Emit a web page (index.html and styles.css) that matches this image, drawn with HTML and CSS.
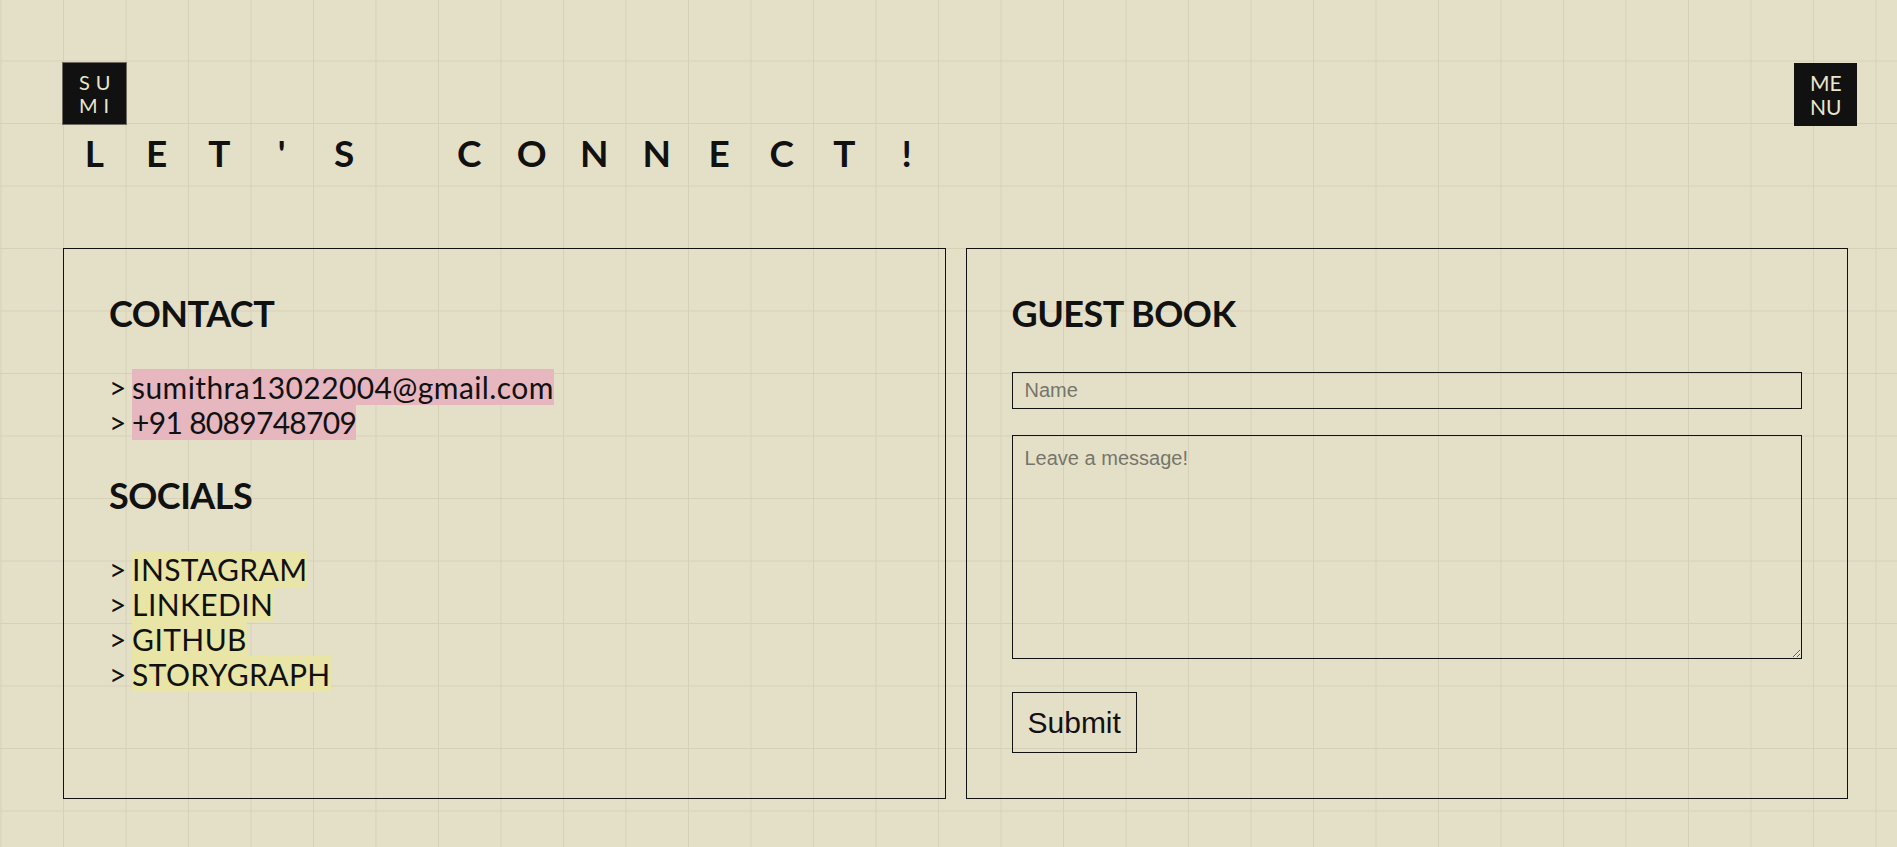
FILE: index.html
```html
<!DOCTYPE html>
<html lang="en">
<head>
<meta charset="utf-8">
<title>Let's Connect!</title>
<link rel="stylesheet" href="styles.css">
</head>
<body>
<div class="page">
  <header class="topbar">
    <a class="logo" href="#"><span>SU</span><span>MI</span></a>
    <button class="menu" type="button"><span>ME</span><span>NU</span></button>
  </header>

  <h1 class="title"><span>L</span><span>E</span><span>T</span><span>'</span><span>S</span><span>&nbsp;</span><span>C</span><span>O</span><span>N</span><span>N</span><span>E</span><span>C</span><span>T</span><span>!</span></h1>

  <main class="panels">
    <section class="panel">
      <h2 class="panel-title">CONTACT</h2>
      <ul class="links">
        <li>&gt; <a class="hl-pink" href="#">sumithra13022004@gmail.com</a></li>
        <li>&gt; <a class="hl-pink tel" href="#">+91 8089748709</a></li>
      </ul>
      <h2 class="panel-title">SOCIALS</h2>
      <ul class="links">
        <li>&gt; <a class="hl-yellow" href="#">INSTAGRAM</a></li>
        <li>&gt; <a class="hl-yellow" href="#">LINKEDIN</a></li>
        <li>&gt; <a class="hl-yellow" href="#">GITHUB</a></li>
        <li>&gt; <a class="hl-yellow" href="#">STORYGRAPH</a></li>
      </ul>
    </section>

    <section class="panel">
      <h2 class="panel-title guest">GUEST BOOK</h2>
      <form class="guest-form">
        <input class="field" type="text" placeholder="Name">
        <textarea class="field area" placeholder="Leave a message!"></textarea>
        <button class="submit" type="button">Submit</button>
      </form>
    </section>
  </main>
</div>
</body>
</html>
```

FILE: styles.css
```css
html, body {
  margin: 0;
  padding: 0;
}

body {
  min-height: 847px;
  background-color: #e4e0c7;
  background-image:
    linear-gradient(to right, #d5d0b6 1px, transparent 1px),
    linear-gradient(to bottom, #d5d0b6 1px, transparent 1px);
  background-size: 62.5px 62.5px;
  background-position: 0.5px -2px;
  font-family: "Lato", "Liberation Sans", sans-serif;
  color: #111111;
}

.page {
  padding: 62px 40px 40px 62px;
}

.topbar {
  display: flex;
  justify-content: space-between;
  align-items: flex-start;
}

.logo,
.menu {
  display: flex;
  flex-direction: column;
  justify-content: center;
  box-sizing: border-box;
  background: #111111;
  color: #ebe6cc;
  font-family: "Lato", sans-serif;
  font-size: 20px;
  line-height: 23px;
  text-decoration: none;
  text-align: left;
}

.logo {
  width: 65px;
  height: 63px;
  border: 1px solid #6e6c60;
  padding-left: 16px;
  letter-spacing: 6px;
}

.menu {
  width: 63px;
  height: 63px;
  border: 0;
  margin-top: 1px;
  padding: 0 0 0 16px;
  font-size: 21px;
  line-height: 24px;
  cursor: pointer;
}

.title {
  display: flex;
  margin: 5px 0 0 1px;
  font-size: 37px;
  font-weight: 700;
  line-height: 44px;
}

.title > span {
  width: 62.5px;
  text-align: center;
}

.panels {
  display: grid;
  grid-template-columns: 1fr 1fr;
  gap: 20px;
  margin: 73px 9px 0 1px;
}

.panel {
  border: 1px solid #111111;
  padding: 43px 45px 45px 45px;
}

.panel-title {
  margin: 0 0 35px;
  font-size: 36px;
  font-weight: 700;
  line-height: 43px;
  letter-spacing: -0.5px;
}

.links {
  list-style: none;
  margin: 0 0 34px;
  padding: 0;
  font-size: 30px;
  line-height: 35px;
  word-spacing: -2px;
}

.links a {
  color: #111111;
  text-decoration: none;
  letter-spacing: 0.4px;
  word-spacing: 0;
}

.links a.tel {
  letter-spacing: -0.7px;
}

.hl-pink {
  background: #e6b7bf;
}

.hl-yellow {
  background: #e8e5a6;
}

.guest {
  margin-bottom: 37px;
}

.guest-form {
  display: flex;
  flex-direction: column;
  align-items: flex-start;
}

.field {
  display: block;
  box-sizing: border-box;
  width: 100%;
  margin: 0;
  border: 1px solid #111111;
  border-radius: 0;
  background: transparent;
  font-family: "Liberation Sans", Arial, sans-serif;
  font-size: 20px;
  color: #111111;
  outline: none;
}

.field::placeholder {
  color: #77756b;
}

input.field {
  height: 37px;
  padding: 0 12px;
}

.area {
  height: 224px;
  margin-top: 26px;
  padding: 11px 12px;
  line-height: 23px;
}

.submit {
  margin-top: 33px;
  box-sizing: border-box;
  padding: 12px 15px;
  border: 1px solid #111111;
  border-radius: 0;
  background: transparent;
  color: #111111;
  font-family: "Liberation Sans", Arial, sans-serif;
  font-size: 30px;
  line-height: 35px;
  cursor: pointer;
}
```
